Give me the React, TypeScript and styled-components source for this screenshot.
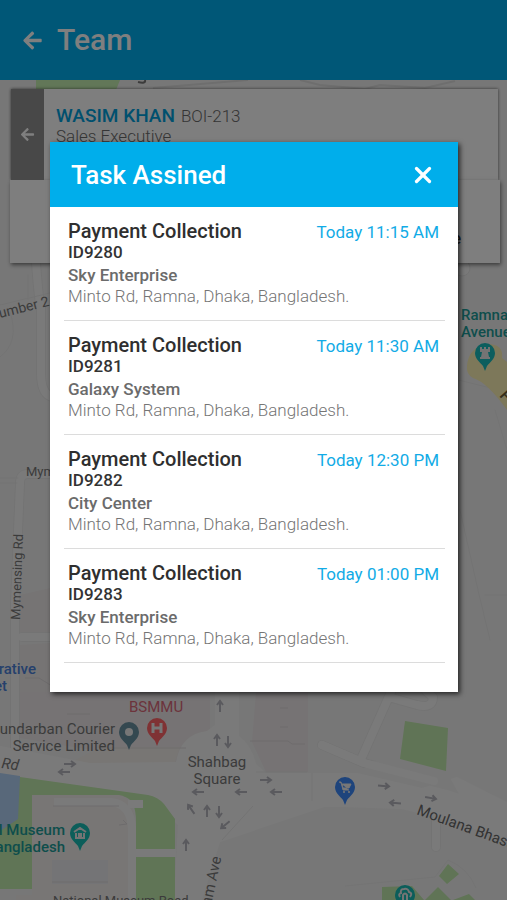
import React from "react";
import styled, { createGlobalStyle } from "styled-components";
import { FaArrowLeft } from "react-icons/fa";
import { X } from "lucide-react";

const GlobalStyle = createGlobalStyle`
  *, *::before, *::after { box-sizing: border-box; }
  body { margin: 0; font-family: Roboto, sans-serif; background: #f0f0f0; }
  button { font: inherit; }
  h1, h2, h3, p, ul { margin: 0; padding: 0; }
`;

const Screen = styled.div`
  position: relative;
  min-height: 100vh;
  overflow: hidden;
`;

const MapCanvas = styled.svg`
  position: absolute;
  inset: 0;
  width: 100%;
  height: 100%;
  font-family: Roboto, sans-serif;
`;

const AppBar = styled.header`
  position: relative;
  display: flex;
  align-items: center;
  gap: 14px;
  height: 80px;
  padding: 0 22px;
  background: #00aeef;
  color: #fff;
`;

const IconButton = styled.button`
  display: flex;
  align-items: center;
  justify-content: center;
  padding: 0;
  border: 0;
  background: none;
  color: inherit;
  cursor: pointer;
`;

const PageTitle = styled.h1`
  font-size: 30px;
  line-height: 36px;
  font-weight: 500;
`;

const Agent = styled.section`
  position: relative;
  padding: 9px 7px 0 10px;
`;

const AgentCard = styled.div`
  display: flex;
  height: 91px;
  margin: 0 2px 0 1px;
  background: #fcfcfc;
  box-shadow: 0 0 3px rgba(0, 0, 0, 0.6);
`;

const BackStrip = styled(IconButton)`
  width: 33px;
  background: #909090;
  color: #fff;
`;

const AgentInfo = styled.div`
  padding: 16px 12px;
  color: #6a6a6a;
  font-size: 17px;
  line-height: 18px;
  font-weight: 300;
`;

const AgentName = styled.h2`
  display: flex;
  align-items: baseline;
  gap: 6px;
  color: #6a6a6a;
  font-size: 17px;
  line-height: 22px;
  font-weight: 300;
`;

const NameText = styled.span`
  color: #00a0dc;
  font-size: 19px;
  font-weight: 500;
`;

const StatusCard = styled.div`
  display: flex;
  align-items: flex-start;
  justify-content: flex-end;
  height: 83px;
  padding: 48px 39px 0 0;
  background: #fcfcfc;
  box-shadow: 1px 2px 4px rgba(0, 0, 0, 0.5);
  color: #333;
  font-size: 17px;
  line-height: 20px;
  font-weight: 500;
`;

const Overlay = styled.div`
  position: absolute;
  inset: 0;
  padding: 142px 49px 0 50px;
  background: rgba(0, 0, 0, 0.5);
`;

const Dialog = styled.section`
  padding-bottom: 29px;
  background: #fff;
  box-shadow: 2px 2px 5px rgba(0, 0, 0, 0.7);
`;

const DialogHeader = styled.header`
  display: flex;
  align-items: center;
  justify-content: space-between;
  height: 65px;
  padding: 0 22px 0 21px;
  background: #00aeeb;
  color: #fff;
`;

const DialogTitle = styled.h2`
  font-size: 26px;
  line-height: 32px;
  font-weight: 500;
`;

const TaskList = styled.ul`
  padding: 0 13px 0 14px;
  list-style: none;
`;

const Task = styled.li`
  display: flex;
  align-items: flex-start;
  justify-content: space-between;
  height: 114px;
  padding: 12px 6px 0 4px;
  border-bottom: 1px solid #dcdcdc;
`;

const TaskTitle = styled.h3`
  color: #2f2f2f;
  font-size: 20px;
  line-height: 24px;
  font-weight: 500;
`;

const TaskId = styled.p`
  color: #333;
  font-size: 17px;
  line-height: 19px;
  font-weight: 500;
`;

const Client = styled.p`
  padding-top: 2px;
  color: #6b6b6b;
  font-size: 17px;
  line-height: 22px;
  font-weight: 500;
`;

const Address = styled.p`
  color: #757575;
  font-size: 17px;
  line-height: 20px;
  font-weight: 300;
  white-space: nowrap;
`;

const TaskTime = styled.time`
  flex: none;
  width: 123px;
  margin-left: -60px;
  color: #12abe6;
  font-size: 17px;
  line-height: 27px;
  text-align: right;
  white-space: nowrap;
`;

const MapLabel = styled.text<{ $color?: string; $size?: number; $weight?: number }>`
  fill: ${(p) => p.$color ?? "#777"};
  font-size: ${(p) => p.$size ?? 15}px;
  font-weight: ${(p) => p.$weight ?? 400};
`;

const tasks = [
  { id: "ID9280", client: "Sky Enterprise", time: "Today 11:15 AM" },
  { id: "ID9281", client: "Galaxy System", time: "Today 11:30 AM" },
  { id: "ID9282", client: "City Center", time: "Today 12:30 PM" },
  { id: "ID9283", client: "Sky Enterprise", time: "Today 01:00 PM" },
];

const laneArrows: [number, number, number][] = [
  [70, 764, 0], [64, 772, 180], [220, 706, -90], [217, 740, -90], [228, 742, 90],
  [198, 792, 180], [241, 792, 180], [191, 809, -125], [207, 811, -90],
  [219, 812, 90], [225, 825, 140], [186, 845, -90], [266, 780, 0],
  [276, 792, 180], [384, 786, 5], [395, 803, 185], [431, 798, 10],
];

const Pin = ({ x, y, color, children }: { x: number; y: number; color: string; children: React.ReactNode }) => (
  <g transform={`translate(${x} ${y})`}>
    <path d="M-10 0a10 10 0 0 1 20 0c0 6-5 9-8 13l-2 5-2-5c-3-4-8-7-8-13z" fill={color} />
    {children}
  </g>
);

const CityMap = () => (
  <MapCanvas viewBox="0 0 507 900" preserveAspectRatio="xMidYMin slice" aria-label="Map of Shahbag">
    <rect width="507" height="900" fill="#efefef" />
    <path d="M36 80H120L116 90H36z" fill="#c4eeb0" />
    <path d="M138 82q8 2 7-2" fill="none" stroke="#777" strokeWidth="2" />
    <path d="M153 88l95-8M300 80l20 5 45 4 15-4 45 3 30-7" fill="none" stroke="#ddd" strokeWidth="2" />

    <path d="M20 595l30-7v47l-32-3zM20 645l30-2v57H20z" fill="#ece8e8" />
    <path d="M20 692h190v50l-25 22L60 745 20 738z" fill="#ece7e8" />
    <path d="M256 692h52v80h-42l-14-30z" fill="#ece6e8" />
    <path d="M100 747h80l-8 25-30 15-80-20z" fill="#f0ece8" />
    <g fill="none" strokeLinecap="round" strokeLinejoin="round">
      <g stroke="#e7e7e7" strokeWidth="10">
        <path d="M36 263q3 40 5 45v65q0 22 12 24" />
        <path d="M50 474H28q-8 0-8 9l-5 120v150" />
        <path d="M50 637H22" />
        <path d="M391 692l-29 65M322 745l42 18 70 18q12 2 12 10M392 698l25 7q16 4 16-8l-7-6" />
        <path d="M436 820v27" />
      </g>
      <g stroke="#f5f5f5" strokeWidth="8">
        <path d="M36 263q3 40 5 45v65q0 22 12 24" />
        <path d="M50 474H28q-8 0-8 9l-5 120v150" />
        <path d="M50 637H22" />
        <path d="M391 692l-29 65M322 745l42 18 70 18q12 2 12 10M392 698l25 7q16 4 16-8l-7-6" />
        <path d="M436 820v27" />
      </g>
      <g stroke="#e7e7e7" strokeWidth="1">
        <path d="M0 305l50-12M10 312q10 30-10 45M0 478h18M0 483h17M28 275v25M460 510l18 80 12 50M485 595h22M495 410l12 40M458 380l49 12" />
      </g>
    </g>
    <circle cx="462" cy="268" r="8" fill="#f5f5f5" stroke="#e5e5e5" />

    <path d="M0 746l90 17 86-1q5-28 31-31l8-6v-33h24v44q13 10 17 28l10 9h91l65 15 35-11 121 61v24l-56-15-60-23-60-15-58-2h-20L220 842l-18 58h-28l4-75-28-27L0 776z" fill="#f5f5f5" />
    <path d="M365 770l82 20 12 4-15-27q-40-12-79-4z" fill="#efefef" />
    <path d="M322 745l42 18 70 18" fill="none" stroke="#f5f5f5" strokeWidth="8" strokeLinecap="round" />
    <path d="M312 773v28M256 772h51M222 840l31-34" fill="none" stroke="#e7e7e7" strokeWidth="1" />

    <path d="M0 773l20 3v46l-6 14H0z" fill="#b0d0f4" />
    <path d="M20 777l128 18q10 2 16 9l11 15v81h-39v-78q0-23-12-25l-8-2H32v94H0v-58l18-12z" fill="#c0eaac" />
    <path d="M32 795h87q15 2 15 24v81H16v-5h16z" fill="#f0ecea" />
    <path d="M54 802h57q20 2 21 27v71M134 853h42" fill="none" stroke="#f5f5f5" strokeWidth="8" />
    <path d="M128 800h15v8h-15z" fill="#f5f5f5" />
    <path d="M52 860h56v24H52z" fill="#e9e9ec" />
    <path d="M52 882h56M67 714h23M25 678h14l13 8M250 741h38l4 3h13M280 708h8M280 727h8M100 748h86M53 806h66M119 825l8-1-4-4" fill="none" stroke="#dcd8da" strokeWidth="1" />

    <path d="M405 721l43 7-2 43-46-12z" fill="#c0e8ac" />
    <path d="M448 864l11 10-12 10-8-8zM382 887l30-1 12 14h-42zM425 900l13-13 13 13M453 900l16-6 6 6" fill="#c0e8ac" />
    <path d="M345 886l90-9 13-17q20 8 28 28" fill="none" stroke="#e8e8e8" strokeWidth="1" />
    <path d="M467 366q1-17 18-22 19-1 17 14l5 4v48q-20-28-34-32-7-4-6-12z" fill="#faf0b4" />

    {laneArrows.map(([x, y, angle]) => (
      <path key={`${x}-${y}`} transform={`translate(${x} ${y}) rotate(${angle})`} d="M-6 0H5M1-3l4 3-4 3" fill="none" stroke="#b4b4bc" strokeWidth="2" />
    ))}

    <MapLabel $size={14} transform="translate(0 318) rotate(-14)">umber 2</MapLabel>
    <MapLabel $size={13} x="26" y="476">Mym</MapLabel>
    <MapLabel $size={13} transform="translate(20 620) rotate(-88)">Mymensing Rd</MapLabel>
    <MapLabel $color="#4a80d8" $weight={500} x="36" y="674" textAnchor="end">rative</MapLabel>
    <MapLabel $color="#4a80d8" $weight={500} x="7" y="691" textAnchor="end">et</MapLabel>
    <MapLabel $color="#d86878" x="129" y="712">BSMMU</MapLabel>
    <MapLabel x="115" y="734" textAnchor="end">Sundarban Courier</MapLabel>
    <MapLabel x="115" y="751" textAnchor="end">Service Limited</MapLabel>
    <MapLabel transform="translate(1 768) rotate(8)" fontStyle="italic">Rd</MapLabel>
    <MapLabel x="217" y="767" textAnchor="middle">Shahbag</MapLabel>
    <MapLabel x="217" y="784" textAnchor="middle">Square</MapLabel>
    <MapLabel $color="#1c9c98" $weight={500} x="65" y="835" textAnchor="end">l Museum</MapLabel>
    <MapLabel $color="#1c9c98" $weight={500} x="65" y="852" textAnchor="end">angladesh</MapLabel>
    <MapLabel $size={13} x="53" y="905">National Museum Road</MapLabel>
    <MapLabel transform="translate(211 906) rotate(-78)">am Ave</MapLabel>
    <MapLabel $color="#666" transform="translate(416 814) rotate(20)">Moulana Bhasa</MapLabel>
    <MapLabel $color="#1c9c98" $weight={500} x="461" y="320">Ramna</MapLabel>
    <MapLabel $color="#1c9c98" $weight={500} x="461" y="337">Avenue</MapLabel>
    <MapLabel $color="#6a5a30" $weight={500} transform="translate(499 396) rotate(48)">F</MapLabel>

    <Pin x={485} y={353} color="#18bcbc">
      <path d="M-5-6h2v2h2v-2h2v2h2v-2h2v5h-2l1 5h1v2H-5V4h1l1-5h-2z" fill="#e8e8e8" />
    </Pin>
    <Pin x={129} y={732} color="#6890a0"><circle r="4" fill="#eee" /></Pin>
    <Pin x={157} y={728} color="#ff6468">
      <path d="M-4-5V5M4-5V5M-4 0H4" stroke="#eee" strokeWidth="3" />
    </Pin>
    <Pin x={80} y={833} color="#18bcb4">
      <path d="M-6-1L0-5 6-1M-4 0v5h8V0M-1 4V1h2v3" fill="none" stroke="#e8e8e8" strokeWidth="2" />
    </Pin>
    <Pin x={345} y={787} color="#3c88f8">
      <path d="M-6-5h2l2 8h6M-3-3h9L4 1h-6z" fill="#eee" stroke="#eee" />
      <circle cx="-1" cy="5" r="1" fill="#eee" /><circle cx="4" cy="5" r="1" fill="#eee" />
    </Pin>
    <Pin x={405} y={895} color="#18bcb4">
      <path d="M-5 2q-2-3 1-4-1-4 3-4 4-1 5 3 4 1 1 5M-2 5v-5q2-3 4 0v5" fill="none" stroke="#e8e8e8" strokeWidth="2" />
    </Pin>
  </MapCanvas>
);

export default function App() {
  return (
    <>
      <GlobalStyle />
      <Screen>
        <CityMap />
        <AppBar>
          <IconButton aria-label="Back"><FaArrowLeft size={21} /></IconButton>
          <PageTitle>Team</PageTitle>
        </AppBar>
        <Agent>
          <AgentCard>
            <BackStrip aria-label="Previous member"><FaArrowLeft size={15} /></BackStrip>
            <AgentInfo>
              <AgentName><NameText>WASIM KHAN</NameText>BOI-213</AgentName>
              <p>Sales Executive</p>
            </AgentInfo>
          </AgentCard>
          <StatusCard>e</StatusCard>
        </Agent>
        <Overlay>
          <Dialog role="dialog" aria-modal="true" aria-labelledby="dialog-title">
            <DialogHeader>
              <DialogTitle id="dialog-title">Task Assined</DialogTitle>
              <IconButton aria-label="Close"><X size={26} strokeWidth={3} /></IconButton>
            </DialogHeader>
            <TaskList>
              {tasks.map((task) => (
                <Task key={task.id}>
                  <div>
                    <TaskTitle>Payment Collection</TaskTitle>
                    <TaskId>{task.id}</TaskId>
                    <Client>{task.client}</Client>
                    <Address>Minto Rd, Ramna, Dhaka, Bangladesh.</Address>
                  </div>
                  <TaskTime>{task.time}</TaskTime>
                </Task>
              ))}
            </TaskList>
          </Dialog>
        </Overlay>
      </Screen>
    </>
  );
}
